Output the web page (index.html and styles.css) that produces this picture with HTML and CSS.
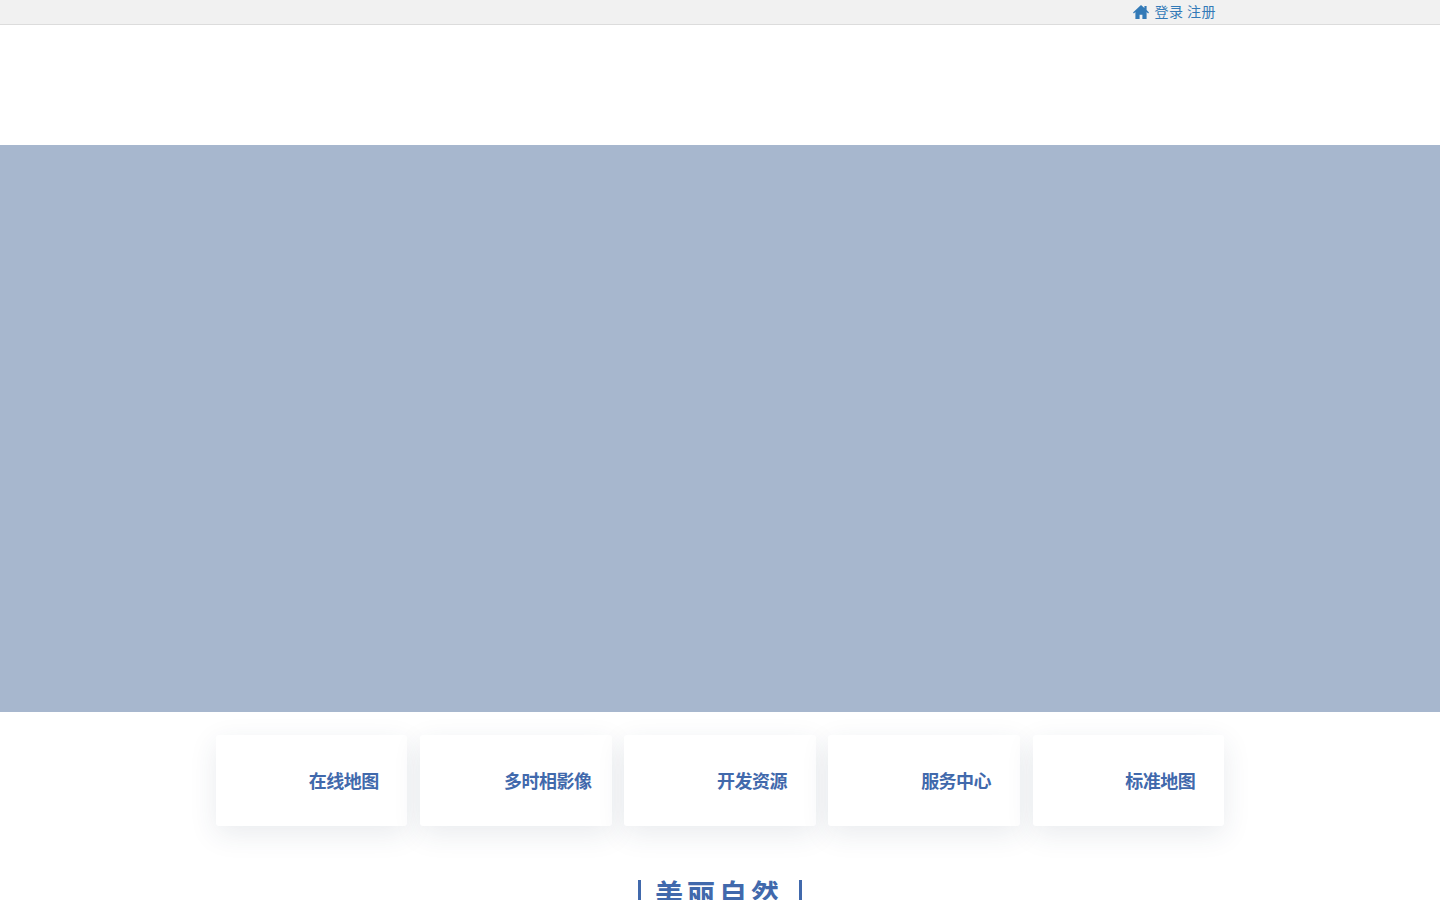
FILE: index.html
```html
<!DOCTYPE html>
<html lang="zh-CN">
  <head>
    <meta charset="UTF-8" />
    <meta name="viewport" content="width=device-width, initial-scale=1.0" />
    <title>美丽自然</title>
    <link rel="stylesheet" href="styles.css">
  </head>
  <body>
    <div class="top-bar">
      <div class="top-links">
        <svg class="home-icon" viewBox="0 0 16 14" aria-hidden="true">
          <path d="M8 0 L0 7.4 L0.9 8.4 L2.4 7.1 L2.4 14 L6.6 14 L6.6 9.8 L9.4 9.8 L9.4 14 L13.6 14 L13.6 7.1 L15.1 8.4 L16 7.4 L13.6 5.1 L13.6 1 L11.4 1 L11.4 3 Z" />
        </svg>
        <a href="#" class="top-link">登录</a>
        <a href="#" class="top-link">注册</a>
      </div>
    </div>

    <div class="logo-row"></div>
    <div class="banner"></div>

    <div class="card-row">
      <a href="#" class="card">在线地图</a>
      <a href="#" class="card">多时相影像</a>
      <a href="#" class="card">开发资源</a>
      <a href="#" class="card">服务中心</a>
      <a href="#" class="card">标准地图</a>
    </div>

    <div class="section-title">
      <h2>美丽自然</h2>
    </div>
  </body>
</html>
```

FILE: styles.css
```css
html,
body {
  height: 900px;
  overflow: hidden;
}

body {
  margin: 0;
  background-color: white;
  font-family: "Liberation Sans", "Noto Sans CJK SC", sans-serif;
}

a {
  text-decoration: none;
}

.top-bar {
  height: 24px;
  background-color: #f1f1f1;
  border-bottom: 1px solid #dcdcdc;
}

.top-links {
  display: flex;
  align-items: center;
  width: 1008px;
  height: 24px;
  margin: 0 auto;
  justify-content: flex-end;
  padding-right: 8px;
  box-sizing: border-box;
}

.home-icon {
  width: 16px;
  height: 14px;
  margin-right: 5.5px;
  fill: #337ab7;
}

.top-link {
  margin-left: 3.5px;
  color: #337ab7;
  font-size: 14px;
  line-height: 24px;
  letter-spacing: 0.5px;
}

.home-icon + .top-link {
  margin-left: 0;
}

.logo-row {
  height: 120px;
}

.banner {
  height: 567px;
  background-color: #a7b7ce;
}

.card-row {
  display: grid;
  grid-template-columns: repeat(5, 1fr);
  gap: 12.7px;
  width: 1008px;
  margin: 23px auto 0;
}

.card {
  height: 91px;
  padding: 0 0 2px 64px;
  box-sizing: border-box;
  display: flex;
  align-items: center;
  justify-content: center;
  border-radius: 3px;
  background-color: white;
  box-shadow: 0 8px 28px rgba(40, 60, 90, 0.1);
  color: #4169ac;
  font-size: 18px;
  font-weight: bold;
  letter-spacing: -0.5px;
}

.section-title {
  margin-top: 54px;
  text-align: center;
}

.section-title h2 {
  display: inline-block;
  margin: 0;
  padding: 0 16px 0 14px;
  border-left: 3px solid #4169ac;
  border-right: 3px solid #4169ac;
  color: #4169ac;
  font-size: 28px;
  line-height: 32px;
  letter-spacing: 4px;
}
```
